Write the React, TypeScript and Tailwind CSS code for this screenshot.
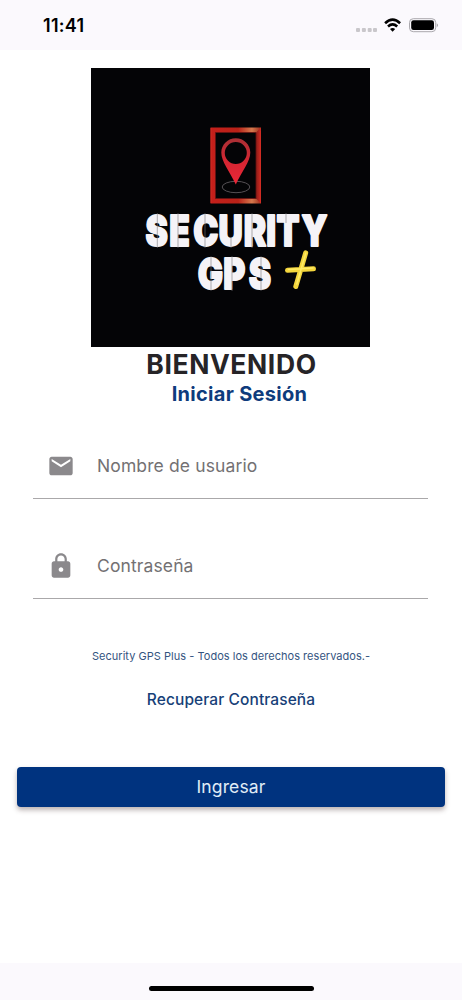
import type { ReactNode } from "react";

function StatusBar() {
  return (
    <header className="flex h-[50px] shrink-0 justify-between bg-[#fbf9fd] pl-[43px] pr-[23px] pt-[15px] text-black">
      <span className="text-[18px] font-semibold leading-[22px] tracking-[0.3px]">11:41</span>
      <svg width="84" height="20" viewBox="355 15 84 20">
        <g fill="#c9c7cb">
          <rect x="356" y="28" width="4" height="4" rx="1" />
          <rect x="361.9" y="28" width="4" height="4" rx="1" />
          <rect x="367.7" y="28" width="4" height="4" rx="1" />
          <rect x="373" y="28" width="4" height="4" rx="1" />
        </g>
        <g fill="none" stroke="#000" strokeWidth="2.6">
          <path d="M385.1 23.2Q392.6 16.2 400.1 23.2" />
          <path d="M388 26.5Q392.6 22.4 397.2 26.5" />
        </g>
        <path d="M390 29Q392.6 26.9 395.2 29L392.6 31.7Z" />
        <rect x="409.5" y="18.7" width="26.2" height="13" rx="3.8" fill="none" stroke="#aaa8ad" />
        <rect x="411.2" y="20.3" width="22.8" height="9.8" rx="2.3" />
        <path d="M436.8 23.2Q438.8 25.2 436.8 27.2Z" fill="#8f8d92" />
      </svg>
    </header>
  );
}

function Logo() {
  return (
    <svg className="mr-px h-[279px] w-[279px]" viewBox="91 68 279 279" role="img" aria-label="Security GPS +">
      <defs>
        <linearGradient id="frame" x1="0" y1="0" x2="1" y2="0">
          <stop offset="0" stopColor="#c51f1b" />
          <stop offset="0.55" stopColor="#b92218" />
          <stop offset="0.82" stopColor="#d5794d" />
          <stop offset="1" stopColor="#9d2c1b" />
        </linearGradient>
        <linearGradient id="side" x1="0" y1="0" x2="1" y2="0">
          <stop offset="0" stopColor="#8e1c17" />
          <stop offset="1" stopColor="#cf2a22" />
        </linearGradient>
        <linearGradient id="pin" x1="0" y1="0" x2="0" y2="1">
          <stop offset="0" stopColor="#a93035" />
          <stop offset="0.5" stopColor="#d52632" />
          <stop offset="1" stopColor="#ee2637" />
        </linearGradient>
      </defs>
      <rect x="91" y="68" width="279" height="279" fill="#040406" />
      <path d="M210.5 127.5H261V203.5H210.5Z M215.5 132.5V198.5H256V132.5Z" fill="url(#frame)" fillRule="evenodd" />
      <path d="M256 132.5L261 127.5V203.5L256 198.5Z" fill="url(#side)" />
      <path d="M215.5 132.5V198.5H256V132.5Z" fill="none" stroke="#671311" strokeWidth="0.8" />
      <path d="M211 128V203M260.3 131V203" stroke="#d52e24" strokeWidth="0.8" />
      <ellipse cx="236" cy="187" rx="13.8" ry="5.7" fill="none" stroke="#555054" strokeWidth="1" />
      <path d="M235.8 138.3C227.7 138.3 221.3 144.6 221.3 152.5C221.3 162 229.7 171 235.8 184.5C241.8 171 250.3 162 250.3 152.5C250.3 144.6 243.9 138.3 235.8 138.3ZM235.8 142A11 11 0 1 1 235.8 164A11 11 0 1 1 235.8 142Z" fill="url(#pin)" fillRule="evenodd" />
      <g transform="scale(0.78 1)" fill="#f5f3f7" stroke="#f5f3f7" strokeWidth="1.8" strokeLinejoin="round" fontFamily="Inter, sans-serif" fontWeight="900" fontSize="43">
        <text x="186.5 217 247.8 280 312.5 341.5 354.5 386.5" y="246">SECURITY</text>
        <text x="253.5 286.3 319" y="289">GPS</text>
      </g>
      <path d="M157.3 213V248M178 213V248M205 213V248M231 238V248M252 213V248M286 213V223M211 256V291M232 256V291M261 256V291" stroke="#77767b" strokeWidth="0.6" />
      <path d="M305.7 252.8L295.8 286.5M287.5 270.3L313.5 268.8" stroke="#f4d63d" strokeWidth="5" strokeLinecap="round" />
      <path d="M305.8 253L296.8 284M288.5 269.4L313 268" stroke="#ffeb65" strokeWidth="1.5" strokeLinecap="round" />
    </svg>
  );
}

function Field({ icon, children }: { icon: ReactNode; children: ReactNode }) {
  return (
    <div className="flex h-[66px] w-full items-center border-b border-[#aaa8aa] text-[#737173]">
      <svg className="ml-[13.5px] mr-[22.5px] h-7 w-7 shrink-0" viewBox="0 0 24 24" fill="#8b898c">{icon}</svg>
      <span className="whitespace-nowrap text-[17.5px] leading-6 tracking-[0.12px]">{children}</span>
    </div>
  );
}

export default function App() {
  return (
    <div className="flex h-[1000px] w-full flex-col overflow-hidden bg-white font-['Inter',sans-serif]">
      <StatusBar />
      <main className="flex flex-1 flex-col items-center pt-[18px]">
        <Logo />
        <h1 className="ml-px h-[33px] whitespace-nowrap text-[26.5px] font-bold leading-[35px] tracking-[0.6px] text-[#262427]">BIENVENIDO</h1>
        <h2 className="ml-[17px] h-[28px] whitespace-nowrap text-[20px] font-bold leading-[28px] tracking-[0.3px] text-[#0e3b7c]">Iniciar Sesión</h2>
        <form className="mt-[25px] flex w-full flex-col gap-[34px] pl-[33px] pr-[34px]">
          <Field icon={<path d="M20 4H4c-1.1 0-1.99.9-1.99 2L2 18c0 1.1.9 2 2 2h16c1.1 0 2-.9 2-2V6c0-1.1-.9-2-2-2zm0 4l-8 5-8-5V6l8 5 8-5v2z" />}>
            Nombre de usuario
          </Field>
          <Field icon={<path d="M18 8h-1V6c0-2.76-2.24-5-5-5S7 3.24 7 6v2H6c-1.1 0-2 .9-2 2v10c0 1.1.9 2 2 2h12c1.1 0 2-.9 2-2V10c0-1.1-.9-2-2-2zm-6 9c-1.1 0-2-.9-2-2s.9-2 2-2 2 .9 2 2-.9 2-2 2zm3.1-9H8.9V6c0-1.71 1.39-3.1 3.1-3.1 1.71 0 3.1 1.39 3.1 3.1v2z" />}>
            Contraseña
          </Field>
        </form>
        <p className="mt-[49px] whitespace-nowrap text-[11px] leading-4 tracking-[0.03px] text-[#34547f]">Security GPS Plus - Todos los derechos reservados.-</p>
        <a className="mt-[26px] whitespace-nowrap text-[15.5px] font-medium leading-5 tracking-[0.1px] text-[#173f78]">Recuperar Contraseña</a>
        <div className="mt-[57px] w-full px-[17px]">
          <button className="h-10 w-full rounded-[4px] bg-[#00337f] text-[17.5px] leading-6 tracking-[0.15px] text-[#e0edf7] shadow-[0_3px_5px_rgba(60,35,35,0.35)]">Ingresar</button>
        </div>
      </main>
      <footer className="flex h-[37px] shrink-0 justify-center bg-[#fbf9fd] pt-[22.5px]">
        <div className="h-[5.5px] w-[165px] rounded-full bg-black" />
      </footer>
    </div>
  );
}
